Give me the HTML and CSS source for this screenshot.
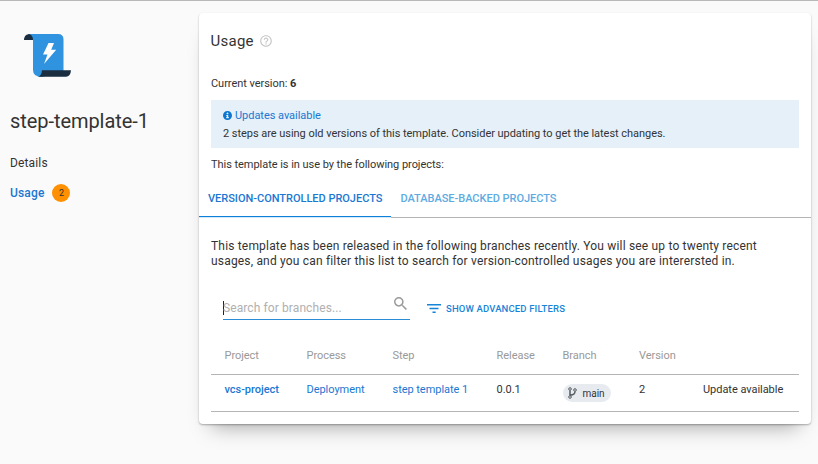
FILE: index.html
```html
<!DOCTYPE html>
<html lang="en">
<head>
<meta charset="utf-8">
<title>step-template-1</title>
<link rel="stylesheet" href="styles.css">
</head>
<body>
<div class="page">
  <aside class="sidebar">
    <svg class="logo" viewBox="0 0 56 54" width="56" height="54">
      <path fill="#1a2e40" d="M4 12c0-4 2.500-6 6-6l4 1v5z"/>
      <path fill="#2f93e0" d="M9 6h29q5.500 0 5.500 5.500V43L22 49q-9 0-9-7V12q0-5-4-6z"/>
      <path fill="#1a2e40" d="M22 42.300h29q-.500 6.500-5 6.500H18q3.500-1 4-6.500z"/>
      <path fill="#fff" d="M28.500 15h5.500l-2.800 6.800h5L24 36l3.500-9.500H23z"/>
    </svg>
    <h1 class="name">step-template-1</h1>
    <a class="nav">Details</a>
    <a class="nav active"><span class="nav-label">Usage</span><span class="count">2</span></a>
  </aside>
  <main class="card">
    <header class="head">
      <h2 class="title">Usage</h2>
      <svg class="help" viewBox="0 0 24 24" width="14" height="14"><path fill="#c6c6c6" d="M11 18h2v-2h-2v2zm1-16C6.480 2 2 6.480 2 12s4.480 10 10 10 10-4.480 10-10S17.520 2 12 2zm0 18c-4.410 0-8-3.590-8-8s3.590-8 8-8 8 3.590 8 8-3.590 8-8 8zm0-14c-2.210 0-4 1.790-4 4h2c0-1.100.9-2 2-2s2 .9 2 2c0 2-3 1.750-3 5h2c0-2.250 3-2.500 3-5 0-2.210-1.790-4-4-4z"/></svg>
    </header>
    <p class="current">Current version: <b>6</b></p>
    <section class="banner">
      <div class="banner-title">
        <svg viewBox="8 8 496 496" width="9" height="9"><path fill="#0d76cf" d="M256 8C119 8 8 119 8 256s111 248 248 248 248-111 248-248S393 8 256 8zm0 80a52 52 0 1 1 0 104 52 52 0 0 1 0-104zm70 314H186v-60h30v-60h-30v-60h110v120h30z"/></svg>
        <span>Updates available</span>
      </div>
      <div class="banner-text">2 steps are using old versions of this template. Consider updating to get the latest changes.</div>
    </section>
    <p class="inuse">This template is in use by the following projects:</p>
    <nav class="tabs">
      <a class="tab selected">VERSION-CONTROLLED PROJECTS</a>
      <a class="tab">DATABASE-BACKED PROJECTS</a>
    </nav>
    <p class="intro">This template has been released in the following branches recently. You will see up to twenty recent<br>usages, and you can filter this list to search for version-controlled usages you are interersted in.</p>
    <div class="filters">
      <div class="search">
        <span class="caret"></span><span class="placeholder">Search for branches...</span>
        <svg class="glass" viewBox="3 3 17.500 17.500" width="13" height="13"><path fill="#9a9a9a" d="M15.500 14h-.790l-.280-.270A6.471 6.471 0 0 0 16 9.500 6.500 6.500 0 1 0 9.500 16c1.610 0 3.090-.590 4.230-1.570l.270.280v.790l5 4.990L20.490 19l-4.990-5zm-6 0C7.010 14 5 11.990 5 9.500S7.010 5 9.500 5 14 7.010 14 9.500 11.990 14 9.500 14z"/></svg>
      </div>
      <a class="advanced">
        <svg viewBox="0 0 14 9" width="14" height="9"><path fill="#1684d8" d="M0 0h14v1.500H0zM2.500 3.700h9v1.500h-9zM5.500 7.400h3.200v1.500H5.500z"/></svg>
        <span>SHOW ADVANCED FILTERS</span>
      </a>
    </div>
    <div class="table">
      <div class="row header">
        <span>Project</span><span>Process</span><span>Step</span><span>Release</span><span>Branch</span><span>Version</span><span></span>
      </div>
      <div class="row">
        <a class="link strong">vcs-project</a><a class="link">Deployment</a><a class="link">step template 1</a><span>0.0.1</span>
        <span class="chip"><svg viewBox="0 0 9 12" width="9" height="12"><g fill="none" stroke="#555c61" stroke-width="1"><circle cx="2" cy="2" r="1.300"/><circle cx="2" cy="10" r="1.300"/><circle cx="7" cy="3" r="1.300"/><path stroke-width="1.500" d="M2 3.500v5M7 4.500c0 2.500-1.500 3-5 3.800"/></g></svg><span>main</span></span>
        <span>2</span><span>Update available</span>
      </div>
    </div>
  </main>
</div>
</body>
</html>
```
FILE: styles.css
```css
* { box-sizing: border-box; }
body {
  margin: 0;
  background: #fafafa;
  color: #333;
  font: 11px/15px Roboto, "Liberation Sans", sans-serif;
}
h1, h2, p { margin: 0; font-weight: 400; }
.page {
  display: flex;
  height: 464px;
  overflow: hidden;
  border-top: 1px solid #b8b8b8;
}
.sidebar { width: 199px; padding: 27px 0 0 10px; }
.logo { display: block; margin-left: 10px; }
.name { margin-top: 26px; font-size: 20px; line-height: 26px; letter-spacing: -.06px; }
.nav { display: flex; align-items: center; height: 30px; font-size: 12px; letter-spacing: .15px; }
.name + .nav { margin-top: 14px; }
.active { color: #1a77d2; font-weight: 500; }
.count {
  width: 18px;
  height: 18px;
  margin-left: 8px;
  border-radius: 50%;
  background: #ff9000;
  color: #333;
  font-size: 9px;
  font-weight: 400;
  line-height: 18px;
  text-align: center;
}
.card {
  width: 612px;
  height: 411px;
  margin-top: 12px;
  border-radius: 4px;
  background: #fff;
  box-shadow: 0 1px 2px rgba(0,0,0,.3), 0 14px 20px -12px rgba(0,0,0,.36);
}
.head { display: flex; align-items: center; height: 56px; padding-left: 11.500px; }
.title { font-size: 15px; line-height: 20px; letter-spacing: .25px; }
.help { margin-left: 5px; }
.current { height: 31px; padding: 7px 12px 0; letter-spacing: -.04px; }
.current b { font-weight: 700; }
.banner { height: 48px; margin: 0 12px; padding: 6px 12px; background: #e5f0f9; line-height: 18px; letter-spacing: -.04px; }
.banner-title { display: flex; align-items: center; gap: 3px; height: 19px; line-height: 19px; color: #1a77d2; }
.inuse { height: 32px; padding: 9px 12px 0; letter-spacing: -.04px; }
.tabs { display: flex; height: 38px; border-bottom: 1px solid #b5b5b5; font-weight: 500; line-height: 37px; letter-spacing: -.02px; }
.tab { height: 37px; padding: 0 9px; color: #5dabe2; }
.selected { border-bottom: 1px solid #0d80d8; color: #1a77d2; box-shadow: 0 1px #d3e8f8; }
.intro { height: 76px; padding: 21px 12px 0; font-size: 12px; letter-spacing: .18px; white-space: nowrap; }
.filters { display: flex; height: 26px; padding-left: 24px; }
.search { display: flex; width: 187px; height: 26px; border-bottom: 1px solid #2a8cd4; color: #b0b0b0; font-size: 12px; line-height: 29px; letter-spacing: .1px; }
.caret { width: 1px; height: 14px; margin: 7px -1px 0 0; background: #222; }
.glass { margin: 3px 3px 0 auto; }
.advanced { display: flex; align-items: center; gap: 5px; height: 28px; margin-left: 17px; color: #1684d8; font-size: 9.500px; font-weight: 500; letter-spacing: .15px; }
.table { margin: 18px 12px 0; }
.row {
  display: grid;
  grid-template-columns: 82px 86px 104px 66px 76.500px 64px 1fr;
  height: 37px;
  padding: 7px 0 0 13.500px;
  border-bottom: 1px solid #b5b5b5;
  white-space: nowrap;
  letter-spacing: -.04px;
}
.header { color: #999; padding-top: 10px; }
.link { color: #1a77d2; }
.strong { font-weight: 500; }
.chip {
  display: flex;
  align-items: center;
  gap: 6px;
  width: 48px;
  height: 18px;
  margin-top: 2px;
  padding-left: 5px;
  border-radius: 9px;
  background: #e7ebf0;
  font-size: 10px;
}
```
